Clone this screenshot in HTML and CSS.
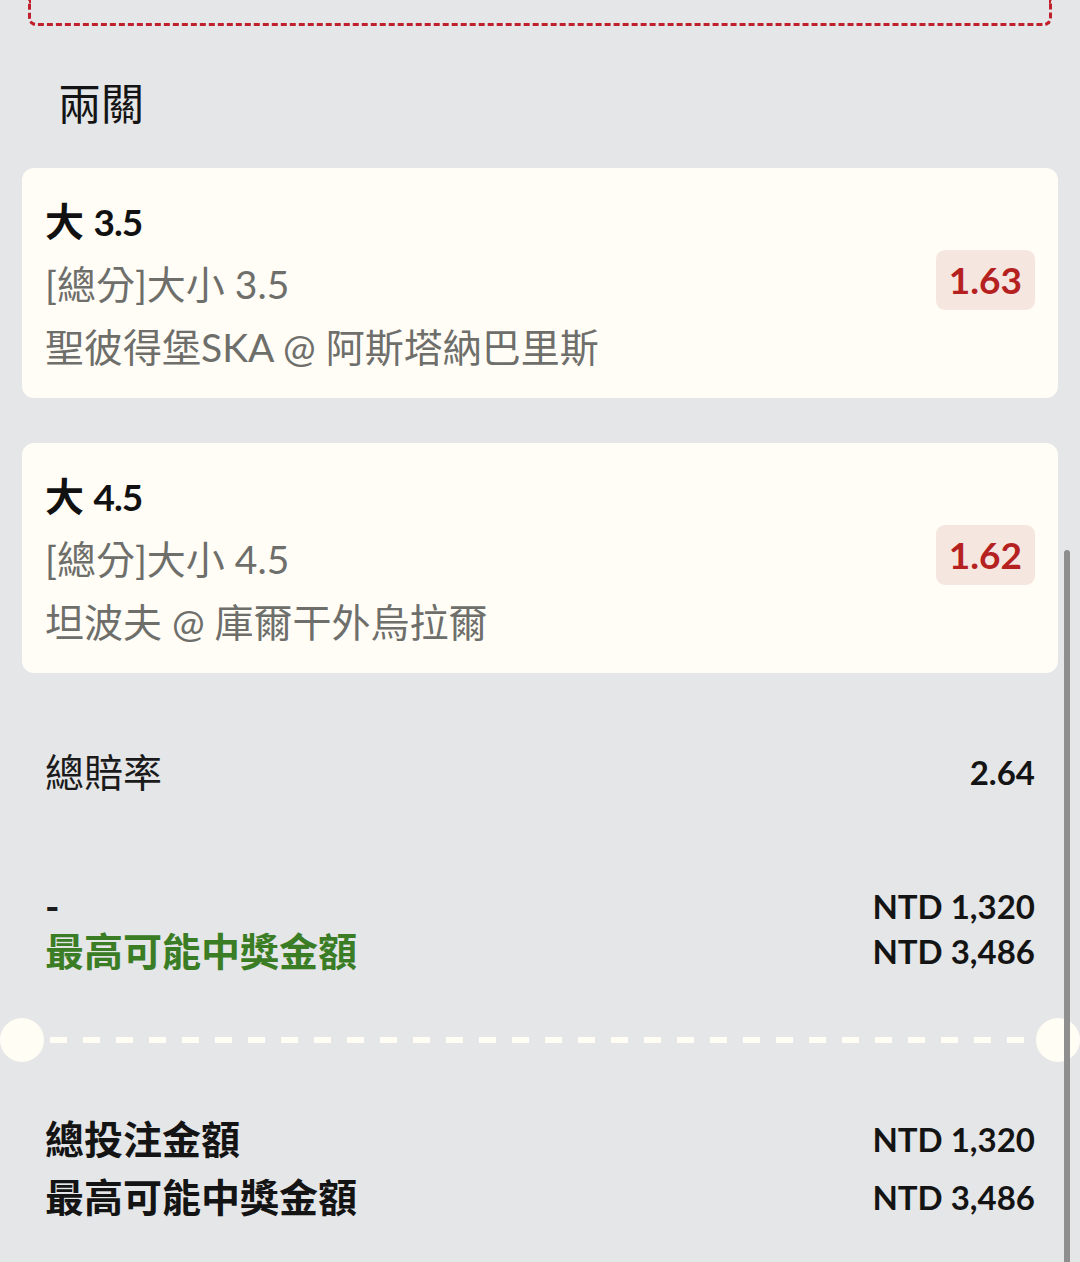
FILE: index.html
```html
<!DOCTYPE html>
<html lang="zh-Hant">
<head>
<meta charset="utf-8">
<title>兩關</title>
<link rel="stylesheet" href="styles.css">
</head>
<body>
<div class="page">
  <div class="prev-box"></div>

  <h2 class="section-title">兩關</h2>

  <div class="cards">
    <div class="card">
      <div class="card-text">
        <div class="pick">大 <span class="num">3.5</span></div>
        <div class="market">[總分]大小 3.5</div>
        <div class="match">聖彼得堡SKA @ 阿斯塔納巴里斯</div>
      </div>
      <div class="odds">1.63</div>
    </div>
    <div class="card">
      <div class="card-text">
        <div class="pick">大 <span class="num">4.5</span></div>
        <div class="market">[總分]大小 4.5</div>
        <div class="match">坦波夫 @ 庫爾干外烏拉爾</div>
      </div>
      <div class="odds">1.62</div>
    </div>
  </div>

  <div class="row total-odds">
    <span class="label">總賠率</span>
    <span class="value">2.64</span>
  </div>

  <div class="stake-group">
    <div class="row small-row">
      <span class="label dash">-</span>
      <span class="value">NTD 1,320</span>
    </div>
    <div class="row small-row">
      <span class="label win">最高可能中獎金額</span>
      <span class="value">NTD 3,486</span>
    </div>
  </div>

  <div class="divider">
    <span class="notch"></span>
    <span class="dashes"></span>
    <span class="notch"></span>
  </div>

  <div class="totals">
    <div class="row total-row">
      <span class="label strong">總投注金額</span>
      <span class="value">NTD 1,320</span>
    </div>
    <div class="row total-row">
      <span class="label strong">最高可能中獎金額</span>
      <span class="value">NTD 3,486</span>
    </div>
  </div>

  <div class="scrollbar"></div>
</div>
</body>
</html>
```

FILE: styles.css
```css
html, body {
  margin: 0;
  padding: 0;
  background: #e5e6e8;
}

body {
  font-family: Lato, "Noto Sans CJK TC", "Noto Sans", sans-serif;
  color: #1b1b1b;
  height: 1262px;
  overflow: hidden;
}

.page {
  position: relative;
  height: 1262px;
}

.prev-box {
  margin: 0 28px;
  height: 23px;
  border: 3px dashed #c0202c;
  border-top: none;
  border-radius: 0 0 8px 8px;
}

.section-title {
  margin: 48px 0 34px 58px;
  font-size: 43px;
  line-height: 60px;
  font-weight: 400;
  color: #141414;
}

.cards {
  display: flex;
  flex-direction: column;
  gap: 45px;
  padding: 0 22px;
}

.card {
  background: #fffdf6;
  border-radius: 12px;
  padding: 22px 23px 19px 23px;
  display: flex;
  align-items: center;
  justify-content: space-between;
  height: 230px;
  box-sizing: border-box;
}

.card-text {
  display: flex;
  flex-direction: column;
}

.pick,
.market,
.match {
  font-size: 39px;
  line-height: 63px;
  white-space: nowrap;
}

.pick {
  font-weight: 700;
  color: #111;
}

.num {
  font-size: 37px;
  letter-spacing: -1px;
}

.market,
.match {
  color: #6e6e6b;
}

.odds {
  background: #f6e6e0;
  color: #b5211f;
  font-weight: 700;
  font-size: 37px;
  line-height: 60px;
  height: 60px;
  padding: 0 13px;
  border-radius: 9px;
  margin-bottom: 10px;
}

.row {
  display: flex;
  justify-content: space-between;
  align-items: center;
  padding: 0 45px;
  font-size: 39px;
}

.total-odds {
  margin-top: 69px;
  line-height: 60px;
}

.total-odds .label {
  color: #1b1b1b;
}

.value {
  font-weight: 700;
  font-size: 33px;
  color: #141414;
}

.stake-group {
  margin-top: 82px;
}

.small-row {
  line-height: 45px;
}

.dash {
  font-weight: 700;
}

.win {
  color: #3b7d25;
  font-weight: 700;
}

.divider {
  display: flex;
  align-items: center;
  margin-top: 44px;
  height: 44px;
}

.notch {
  flex: 0 0 44px;
  height: 44px;
  border-radius: 50%;
  background: #fffdf4;
}

.dashes {
  flex: 1;
  height: 6px;
  margin: 0 5px 0 6px;
  background-image: linear-gradient(to right, #fffdf4 0 17px, transparent 17px 33px);
  background-size: 33px 6px;
  background-repeat: repeat-x;
}

.totals {
  margin-top: 48px;
}

.total-row {
  line-height: 58px;
}

.strong {
  font-weight: 700;
  color: #141414;
}

.scrollbar {
  position: absolute;
  left: 1064px;
  top: 550px;
  bottom: 0;
  width: 6px;
  border-radius: 3px 3px 0 0;
  background: #8e8e8f;
}
```
